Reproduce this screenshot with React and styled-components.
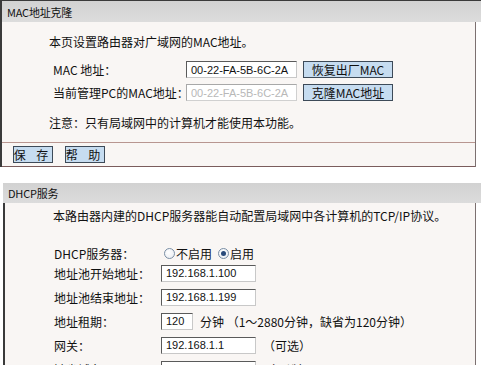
import React from "react";
import styled, { createGlobalStyle } from "styled-components";

const Global = createGlobalStyle`
  html, body { margin: 0; padding: 0; background: #ffffff; }
  body {
    font-family: "Noto Sans CJK SC", "Noto Sans", sans-serif;
    font-size: 12px;
    color: #111;
    width: 481px;
    height: 365px;
    overflow: hidden;
  }
`;

const Page = styled.div`
  display: flex;
  flex-direction: column;
  width: 481px;
`;

const Panel = styled.section`
  display: flex;
  flex-direction: column;
  margin-left: ${(p) => p.$indent}px;
  margin-top: ${(p) => p.$top}px;
`;

const TitleBar = styled.div`
  box-sizing: border-box;
  height: ${(p) => p.$h}px;
  display: flex;
  align-items: center;
  padding-left: 5px;
  background: linear-gradient(#d2d2d2, #dcdcdc);
  border-left: ${(p) => (p.$edge ? "2px solid #3a3a3a" : "none")};
  border-top: ${(p) => (p.$edge ? "1px solid #3a3a3a" : "none")};
  font-size: 11px;
  color: #111;
  letter-spacing: -0.2px;
`;

const Body = styled.div`
  width: ${(p) => p.$w}px;
  box-sizing: border-box;
  background: #f9f6f4;
  border-left: 2px solid #3a3a3a;
  border-right: 1px solid #7c7070;
  display: flex;
  flex-direction: column;
`;

const Content = styled.div`
  padding: ${(p) => p.$pad};
  display: flex;
  flex-direction: column;
`;

const Para = styled.div`
  height: ${(p) => p.$h}px;
  display: flex;
  align-items: center;
  padding-left: ${(p) => p.$left || 47}px;
  white-space: nowrap;
`;

const Spacer = styled.div`
  height: ${(p) => p.$h}px;
`;

const FormRow = styled.div`
  height: ${(p) => p.$h}px;
  display: grid;
  grid-template-columns: ${(p) => p.$cols} auto auto 1fr;
  align-items: center;
  padding-left: ${(p) => p.$left}px;
  column-gap: 6px;
`;

const Label = styled.span`
  white-space: nowrap;
`;

const Field = styled.div`
  width: ${(p) => p.$w}px;
  height: 17px;
  box-sizing: border-box;
  border: 1px solid ${(p) => (p.$disabled ? "#a8a8a8" : "#5a5a5a")};
  border-right-color: ${(p) => (p.$disabled ? "#d0d0d0" : "#c8c8c8")};
  border-bottom-color: ${(p) => (p.$disabled ? "#d0d0d0" : "#c8c8c8")};
  background: #ffffff;
  color: ${(p) => (p.$disabled ? "#b8b8b8" : "#111")};
  font-family: "Liberation Sans", "Noto Sans", sans-serif;
  font-size: 11px;
  display: flex;
  align-items: center;
  padding-left: 4px;
  white-space: nowrap;
  overflow: hidden;
`;

const Btn = styled.div`
  width: ${(p) => p.$w}px;
  height: 17px;
  box-sizing: border-box;
  background: #c6dcf0;
  border: 1px solid #3d4a58;
  display: flex;
  align-items: center;
  justify-content: center;
  white-space: nowrap;
  color: #111;
  letter-spacing: ${(p) => p.$ls || 0}px;
`;

const Separator = styled.div`
  height: 1px;
  background: #b89690;
`;

const ButtonBar = styled.div`
  height: 23px;
  display: flex;
  align-items: center;
  gap: 12px;
  padding-left: 11px;
`;

const BottomEdge = styled.div`
  height: 1px;
  background: #7a5c5c;
`;

const Note = styled.span`
  margin-left: 1px;
  white-space: nowrap;
`;

const Radios = styled.div`
  display: flex;
  align-items: center;
  gap: 6px;
`;

const RadioItem = styled.label`
  display: flex;
  align-items: center;
  gap: 1px;
`;

const RadioDot = styled.span`
  width: 11px;
  height: 11px;
  box-sizing: border-box;
  border-radius: 50%;
  border: 1px solid #7a8ea4;
  background: radial-gradient(circle at 40% 40%, #ffffff, #e6eaf0);
  display: flex;
  align-items: center;
  justify-content: center;
  &::after {
    content: "";
    width: 5px;
    height: 5px;
    border-radius: 50%;
    background: ${(p) => (p.$on ? "#2a4a7a" : "transparent")};
  }
`;

export default function App() {
  return (
    <>
      <Global />
      <Page>
        <Panel $indent={0} $top={0}>
          <TitleBar $h={22} $edge>MAC地址克隆</TitleBar>
          <Body $w={476}>
            <Content $pad="8px 0 2px 0">
              <Para $h={22}>本页设置路由器对广域网的MAC地址。</Para>
              <Spacer $h={6} />
              <FormRow $h={23} $cols="127px" $left={51}>
                <Label>MAC 地址：</Label>
                <Field $w={111}>00-22-FA-5B-6C-2A</Field>
                <Btn $w={90}>恢复出厂MAC</Btn>
              </FormRow>
              <FormRow $h={23} $cols="127px" $left={51}>
                <Label>当前管理PC的MAC地址：</Label>
                <Field $w={111} $disabled>
                  00-22-FA-5B-6C-2A
                </Field>
                <Btn $w={90}>克隆MAC地址</Btn>
              </FormRow>
              <Para $h={36}>注意：只有局域网中的计算机才能使用本功能。</Para>
            </Content>
            <Separator />
            <ButtonBar>
              <Btn $w={40} $ls={4}>保 存</Btn>
              <Btn $w={40} $ls={4}>帮 助</Btn>
            </ButtonBar>
            <BottomEdge />
          </Body>
        </Panel>

        <Panel $indent={3} $top={16}>
          <TitleBar $h={20}>DHCP服务</TitleBar>
          <Body $w={473}>
            <Content $pad="0">
              <Para $h={24} $left={48}>
                本路由器内建的DHCP服务器能自动配置局域网中各计算机的TCP/IP协议。
              </Para>
              <Spacer $h={18} />
              <FormRow $h={16} $cols="104px" $left={49}>
                <Label>DHCP服务器：</Label>
                <Radios>
                  <RadioItem>
                    <RadioDot />
                    不启用
                  </RadioItem>
                  <RadioItem>
                    <RadioDot $on />
                    启用
                  </RadioItem>
                </Radios>
              </FormRow>
              <FormRow $h={24} $cols="101px" $left={49}>
                <Label>地址池开始地址：</Label>
                <Field $w={95}>192.168.1.100</Field>
              </FormRow>
              <FormRow $h={24} $cols="101px" $left={49}>
                <Label>地址池结束地址：</Label>
                <Field $w={95}>192.168.1.199</Field>
              </FormRow>
              <FormRow $h={24} $cols="101px" $left={49}>
                <Label>地址租期：</Label>
                <Field $w={32}>120</Field>
                <Note>分钟 （1～2880分钟，缺省为120分钟）</Note>
              </FormRow>
              <FormRow $h={24} $cols="101px" $left={49}>
                <Label>网关：</Label>
                <Field $w={95}>192.168.1.1</Field>
                <Note>（可选）</Note>
              </FormRow>
              <FormRow $h={24} $cols="101px" $left={49}>
                <Label>缺省域名：</Label>
                <Field $w={95}></Field>
                <Note>（可选）</Note>
              </FormRow>
            </Content>
          </Body>
        </Panel>
      </Page>
    </>
  );
}
